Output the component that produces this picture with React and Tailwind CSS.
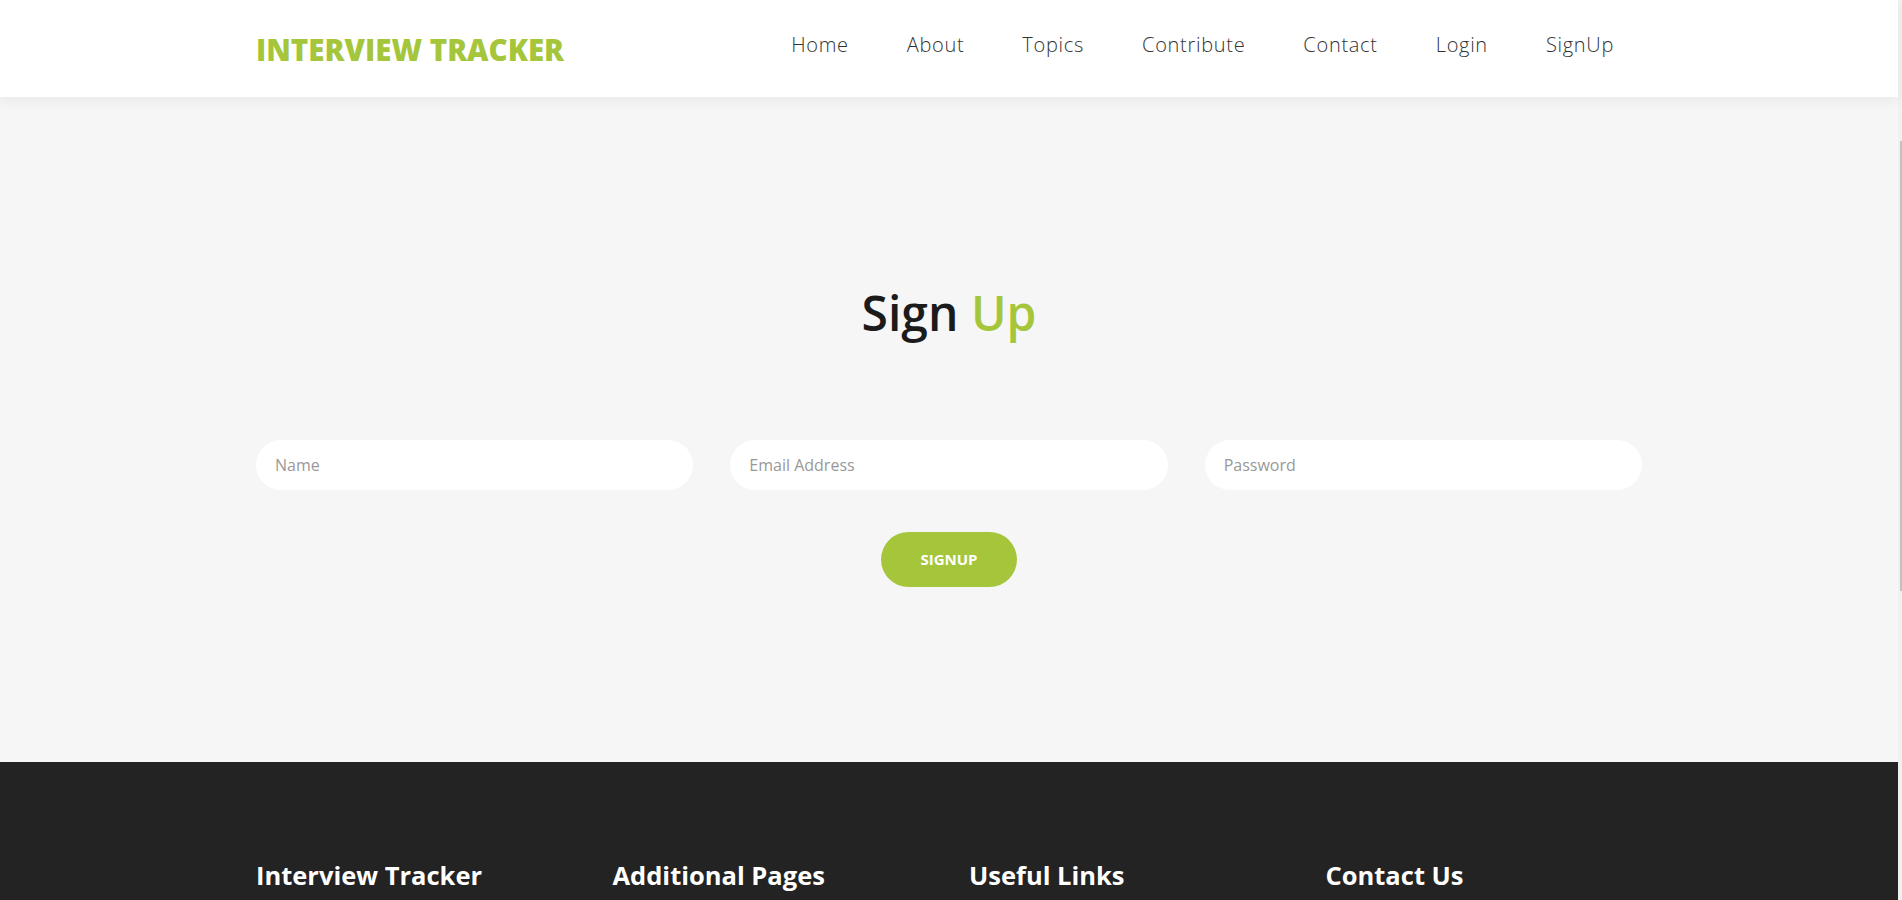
export default function App() {
  const nav = ["Home", "About", "Topics", "Contribute", "Contact", "Login", "SignUp"];
  const cols = ["Interview Tracker", "Additional Pages", "Useful Links", "Contact Us"];

  return (
    <div className="flex min-h-screen w-full bg-[#f6f6f6] font-['Open_Sans',sans-serif]">
      <div className="flex-1 min-w-0">
        {/* Header */}
        <header className="relative z-10 h-[97px] bg-white shadow-[0_4px_12px_rgba(0,0,0,0.06)]">
          <div className="mx-auto flex h-full w-[1386px] items-center justify-between pt-[2px]">
            <a href="#" className="text-[29.5px] font-extrabold text-[#a5c63b] leading-none">
              INTERVIEW TRACKER
            </a>
            <nav className="flex items-center gap-[58px] pr-[28px] -mt-[10px]">
              {nav.map((item) => (
                <a key={item} href="#" className="text-[20px] font-light tracking-[0.7px] text-[#333] leading-none">
                  {item}
                </a>
              ))}
            </nav>
          </div>
        </header>

        {/* Sign up */}
        <section className="bg-[#f6f6f6] pt-[188px] pb-[175px]">
          <div className="mx-auto w-[1386px]">
            <h2 className="text-center text-[48px] font-semibold leading-[56px] text-[#1b1b1b]">
              Sign <span className="text-[#a5c63b]">Up</span>
            </h2>

            <form className="mt-[99px] flex flex-col items-center">
              <div className="grid w-full grid-cols-3 gap-x-[37px]">
                <input
                  type="text"
                  placeholder="Name"
                  className="h-[50px] rounded-full bg-white px-[19px] text-[16px] text-[#333] outline-none placeholder:text-[#999]"
                />
                <input
                  type="email"
                  placeholder="Email Address"
                  className="h-[50px] rounded-full bg-white px-[19px] text-[16px] text-[#333] outline-none placeholder:text-[#999]"
                />
                <input
                  type="password"
                  placeholder="Password"
                  className="h-[50px] rounded-full bg-white px-[19px] text-[16px] text-[#333] outline-none placeholder:text-[#999]"
                />
              </div>
              <button
                type="button"
                className="mt-[42px] h-[55px] w-[136px] rounded-full bg-[#a5c63b] text-[15px] font-bold text-white"
              >
                SIGNUP
              </button>
            </form>
          </div>
        </section>

        {/* Footer */}
        <footer className="bg-[#232323] pt-[95px] pb-[60px]">
          <div className="mx-auto grid w-[1386px] grid-cols-4 gap-x-[40px]">
            {cols.map((c) => (
              <div key={c}>
                <h3 className="text-[25.5px] font-bold leading-[36px] text-white">{c}</h3>
              </div>
            ))}
          </div>
        </footer>
      </div>

      {/* scrollbar strip */}
      <div className="w-[4px] shrink-0 bg-[#f1f1f1]">
        <div className="ml-[2px] mt-[141px] h-[450px] w-[2px] bg-[#c1c1c1]" />
      </div>
    </div>
  );
}
